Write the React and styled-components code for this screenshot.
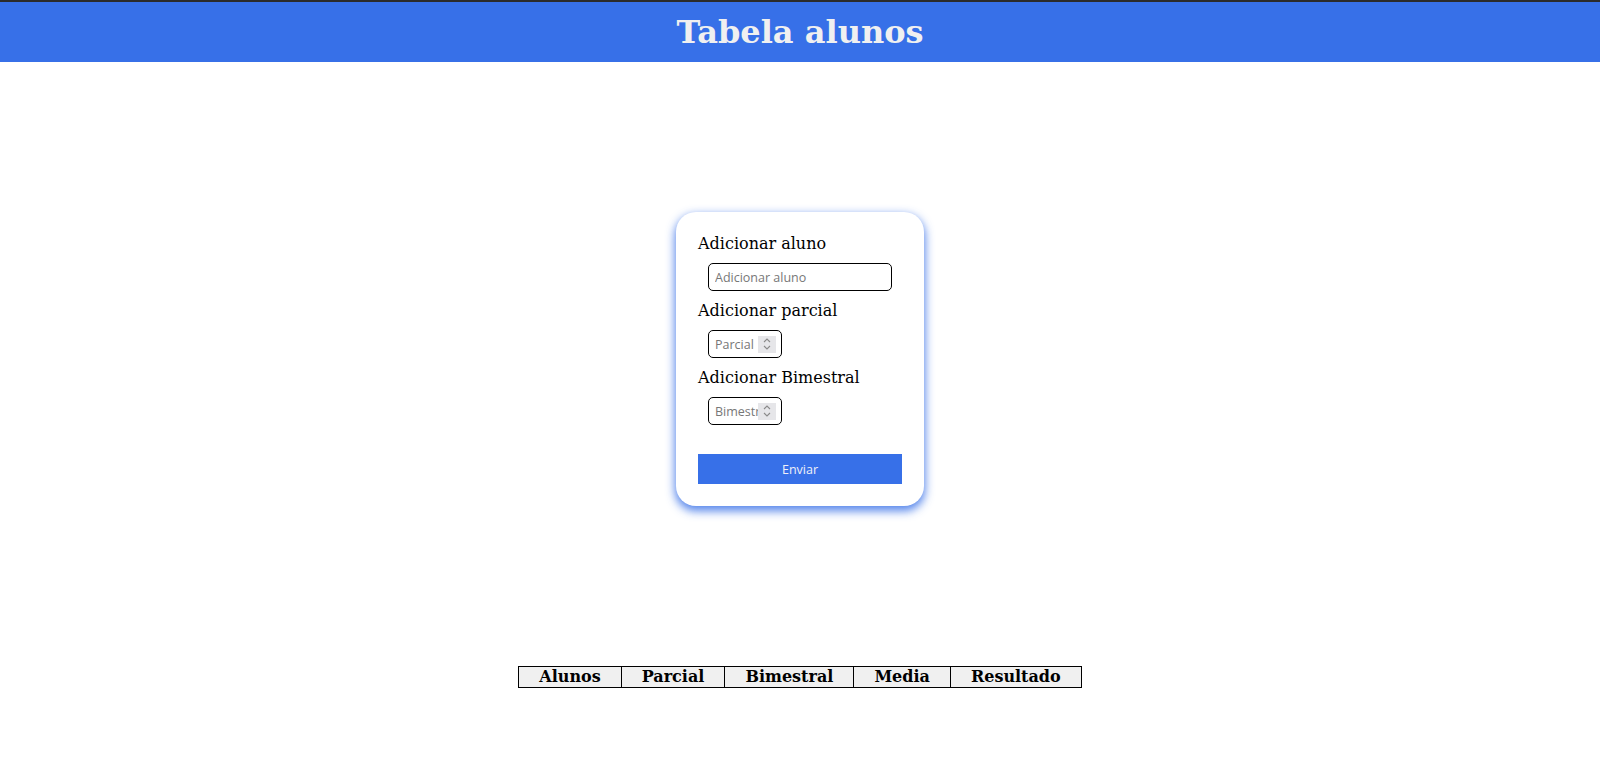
import React from "react";
import styled, { createGlobalStyle } from "styled-components";

//styled ------------------------------------
const GlobalStyle = createGlobalStyle`
  body {
    margin: 0;
    background-color: #ffffff;
    font-family: "DejaVu Serif", serif;
  }
`;

const Header = styled.header`
  height: 60px;
  border-top: 2px solid #2b2b2b;
  background-color: #3770e8;
  display: flex;
  justify-content: center;
  align-items: center;
`;

const Title = styled.h1`
  margin: 0;
  font-size: 32px;
  font-weight: bold;
  color: #f0f0f0;
  line-height: 60px;
`;

const Main = styled.main`
  display: flex;
  flex-direction: column;
  align-items: center;
`;

const FormCard = styled.form`
  width: 248px;
  box-sizing: border-box;
  margin-top: 150px;
  padding: 22px 22px 22px 22px;
  background-color: #ffffff;
  border-radius: 20px;
  display: flex;
  flex-direction: column;
  box-shadow: 0px 4px 10px 1px rgba(55, 112, 232, 0.85);
`;

const Label = styled.label`
  font-size: 16px;
  line-height: 19px;
  color: #000000;
`;

const TextInput = styled.input`
  box-sizing: border-box;
  width: 184px;
  height: 28px;
  margin: 10px 0 10px 10px;
  padding: 0 6px;
  border: 1px solid #000000;
  border-radius: 5px;
  font-family: "Open Sans", sans-serif;
  font-size: 12.5px;
  outline: none;
  &::placeholder {
    color: #777777;
  }
`;

const NumberBox = styled.div`
  box-sizing: border-box;
  width: 74px;
  height: 28px;
  margin: 10px 0 ${(p) => (p.$last ? "0" : "10px")} 10px;
  padding: 0 5px 0 6px;
  border: 1px solid #000000;
  border-radius: 5px;
  display: flex;
  align-items: center;
`;

const NumberInput = styled.input`
  flex: 1;
  min-width: 0;
  border: none;
  padding: 0;
  outline: none;
  font-family: "Open Sans", sans-serif;
  font-size: 12.5px;
  &::placeholder {
    color: #777777;
  }
`;

const Spinner = styled.span`
  width: 18px;
  height: 17px;
  background-color: #e6e6e9;
  display: flex;
  align-items: center;
  justify-content: center;
`;

const SendButton = styled.button`
  margin-top: 29px;
  height: 30px;
  width: 100%;
  border: none;
  background-color: #3770e8;
  color: #f0f0f8;
  font-family: "Open Sans", sans-serif;
  font-size: 12.5px;
  cursor: pointer;
`;

const Table = styled.table`
  margin-top: 160px;
  border-collapse: collapse;
`;

const HeadCell = styled.th`
  padding: 1px 20px;
  border: 1px solid #000000;
  background-color: #f0f0f0;
  font-size: 16px;
  line-height: 18px;
  font-weight: bold;
  color: #000000;
`;

function SpinIcon() {
  return (
    <svg width="10" height="14" viewBox="0 0 10 14">
      <path
        d="M2 5 L5 2 L8 5 M2 9 L5 12 L8 9"
        fill="none"
        stroke="#8a8a8a"
        strokeWidth="1.1"
      />
    </svg>
  );
}

function NumberField({ placeholder, last }) {
  return (
    <NumberBox $last={last}>
      <NumberInput type="text" placeholder={placeholder} />
      <Spinner>
        <SpinIcon />
      </Spinner>
    </NumberBox>
  );
}

const colunas = ["Alunos", "Parcial", "Bimestral", "Media", "Resultado"];

export default function App() {
  return (
    <>
      <GlobalStyle />
      <Header>
        <Title>Tabela alunos</Title>
      </Header>
      <Main>
        <FormCard onSubmit={(e) => e.preventDefault()}>
          <Label>Adicionar aluno</Label>
          <TextInput type="text" placeholder="Adicionar aluno" />
          <Label>Adicionar parcial</Label>
          <NumberField placeholder="Parcial" />
          <Label>Adicionar Bimestral</Label>
          <NumberField placeholder="Bimestral" last />
          <SendButton type="submit">Enviar</SendButton>
        </FormCard>
        <Table>
          <thead>
            <tr>
              {colunas.map((c) => (
                <HeadCell key={c}>{c}</HeadCell>
              ))}
            </tr>
          </thead>
        </Table>
      </Main>
    </>
  );
}
